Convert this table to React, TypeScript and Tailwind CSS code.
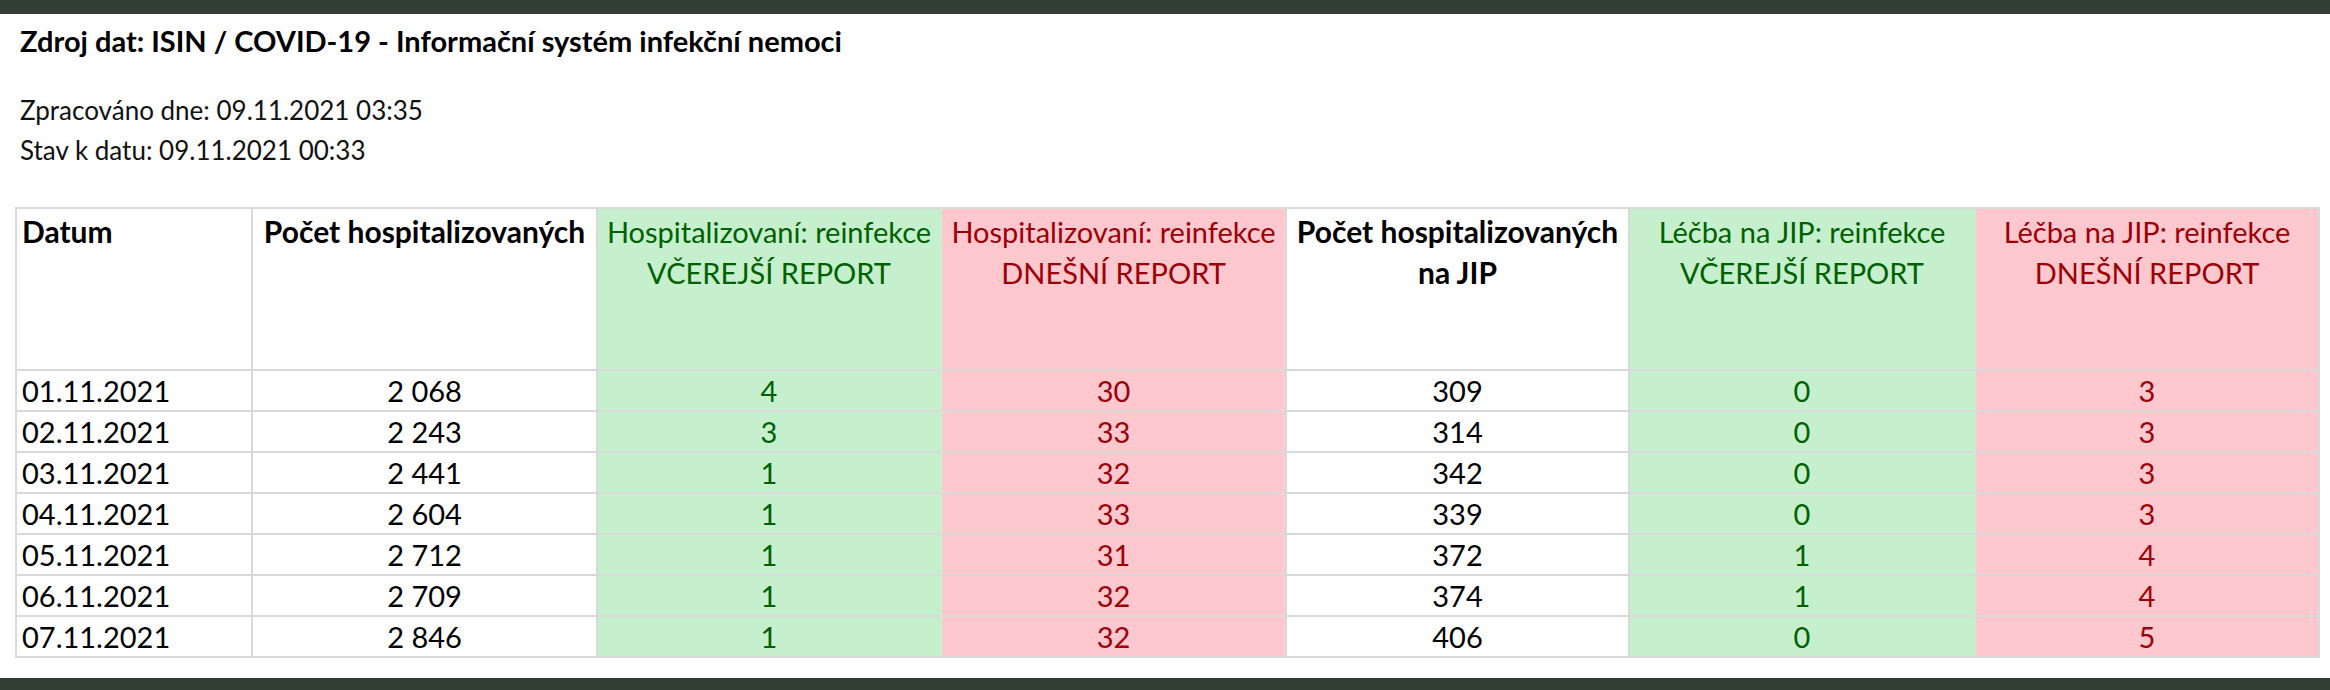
import React from "react";

const rows = [
  ["01.11.2021", "2 068", "4", "30", "309", "0", "3"],
  ["02.11.2021", "2 243", "3", "33", "314", "0", "3"],
  ["03.11.2021", "2 441", "1", "32", "342", "0", "3"],
  ["04.11.2021", "2 604", "1", "33", "339", "0", "3"],
  ["05.11.2021", "2 712", "1", "31", "372", "1", "4"],
  ["06.11.2021", "2 709", "1", "32", "374", "1", "4"],
  ["07.11.2021", "2 846", "1", "32", "406", "0", "5"],
];

const cellBase = "box-border border-b-2 border-r-2 border-[#d9d9d9]";
const green = "bg-[#c6efce] text-[#006100] border-r-[#c6efce]";
const red = "bg-[#ffc7ce] text-[#9c0006]";
const colKind = ["white", "white", "green", "red", "white", "green", "red"];

function kindClass(i: number) {
  if (colKind[i] === "green") return green;
  if (colKind[i] === "red") return red;
  return "bg-white text-black";
}

export default function App() {
  return (
    <div
      className="w-[2330px] h-[690px] bg-white flex flex-col overflow-hidden"
      style={{ fontFamily: "Lato, 'Open Sans', sans-serif" }}
    >
      <div className="h-[14px] bg-[#323d33] shrink-0" />
      <div className="flex-1 flex flex-col">
        <div className="pl-[20px] pt-[10px] text-[29px] leading-[34px] font-bold text-black">
          Zdroj dat: ISIN / COVID-19 - Informační systém infekční nemoci
        </div>
        <div className="pl-[20px] pt-[32px] text-[26px] leading-[40px] text-[#111]">
          <div>Zpracováno dne: 09.11.2021 03:35</div>
          <div>Stav k datu: 09.11.2021 00:33</div>
        </div>
        <div className="ml-[15px] mt-[37px] w-max border-t-2 border-l-2 border-[#d9d9d9] grid grid-cols-[236px_345px_344px_345px_343px_346px_344px] grid-rows-[162px_repeat(7,41px)]">
          <div className={`${cellBase} bg-white text-black font-bold text-[30px] leading-[41px] pt-[2px] px-[5px] text-left`}>
            Datum
          </div>
          <div className={`${cellBase} bg-white text-black font-bold text-[30px] leading-[41px] pt-[2px] text-center whitespace-nowrap`}>
            Počet hospitalizovaných
          </div>
          <div className={`${cellBase} ${green} text-[29px] leading-[41px] pt-[2px] text-center whitespace-nowrap`}>
            Hospitalizovaní: reinfekce
            <br />
            VČEREJŠÍ REPORT
          </div>
          <div className={`${cellBase} ${red} text-[29px] leading-[41px] pt-[2px] text-center whitespace-nowrap`}>
            Hospitalizovaní: reinfekce
            <br />
            DNEŠNÍ REPORT
          </div>
          <div className={`${cellBase} bg-white text-black font-bold text-[30px] leading-[41px] pt-[2px] text-center whitespace-nowrap`}>
            Počet hospitalizovaných
            <br />
            na JIP
          </div>
          <div className={`${cellBase} ${green} text-[29px] leading-[41px] pt-[2px] text-center whitespace-nowrap`}>
            Léčba na JIP: reinfekce
            <br />
            VČEREJŠÍ REPORT
          </div>
          <div className={`${cellBase} ${red} text-[29px] leading-[41px] pt-[2px] text-center whitespace-nowrap`}>
            Léčba na JIP: reinfekce
            <br />
            DNEŠNÍ REPORT
          </div>
          {rows.map((r) =>
            r.map((v, i) => (
              <div
                key={r[0] + i}
                className={`${cellBase} ${kindClass(i)} text-[29px] leading-[39px] ${
                  i === 0 ? "text-left px-[5px]" : "text-center"
                }`}
              >
                {v}
              </div>
            ))
          )}
        </div>
      </div>
      <div className="h-[12px] bg-[#323d33] shrink-0" />
    </div>
  );
}
